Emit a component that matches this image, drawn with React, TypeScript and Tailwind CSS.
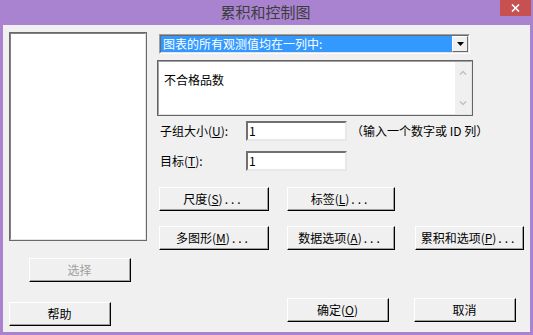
import React from 'react';

const FONT = 'font-["SimSun","Noto_Sans_CJK_SC",sans-serif]';

function Btn({ label, className = '', disabled = false }: { label: React.ReactNode; className?: string; disabled?: boolean }) {
    return (
        <div
            className={`h-[24px] bg-[#f0f0f0] border border-t-white border-l-white border-r-black border-b-black flex ${className}`}
        >
            <div className="flex-1 flex items-center justify-center border-r border-b border-[#a0a0a0]">
                <span className={`text-[12px] leading-none ${disabled ? 'text-[#a0a0a0]' : 'text-black'}`}>{label}</span>
            </div>
        </div>
    );
}

function Key({ k }: { k: string }) {
    return <span className="underline underline-offset-1">{k}</span>;
}

function Dots() {
    return <span className="tracking-[3px] ml-[2px]">...</span>;
}

function Field({ value }: { value: string }) {
    return (
        <div className="w-[101px] h-[20px] border-2 border-t-[#707070] border-l-[#707070] border-r-[#e8e8e8] border-b-[#e8e8e8] bg-white flex items-center pl-[1px]">
            <span className="text-[12px] leading-none text-black">{value}</span>
        </div>
    );
}

export default function App() {
    return (
        <div className={`w-[533px] h-[335px] bg-[#a983d0] flex flex-col select-none ${FONT}`}>
            {/* title bar */}
            <div className="h-[25px] flex items-start shrink-0">
                <div className="w-[31px]" />
                <div className="flex-1 flex justify-center pt-[3px]">
                    <span className="text-[15px] leading-[18px] text-[#3c3c3c] font-['Noto_Sans_CJK_SC',sans-serif]">累积和控制图</span>
                </div>
                <div className="w-[31px] h-[16px] bg-[#c75050] flex items-center justify-center mr-[2px]">
                    <svg width="9" height="8" viewBox="0 0 9 8">
                        <path d="M1 0.5 L8 7.5 M8 0.5 L1 7.5" stroke="white" strokeWidth="1.6" />
                    </svg>
                </div>
            </div>

            {/* body */}
            <div className="flex-1 mx-[3px] mb-[3px] bg-[#f0f0f0] flex">
                {/* left column */}
                <div className="w-[138px] ml-[6px] mt-[7px] flex flex-col">
                    <div className="h-[209px] border border-[#696969]">
                        <div className="h-full border border-t-[#808080] border-l-[#808080] border-r-[#e3e3e3] border-b-[#e3e3e3] bg-white" />
                    </div>
                    <Btn label="选择" disabled className="w-[102px] ml-[20px] mt-[17px]" />
                    <Btn label="帮助" className="w-[102px] mt-[20px]" />
                </div>

                {/* right column */}
                <div className="flex-1 ml-[10px] flex flex-col">
                    {/* dropdown */}
                    <div className="mt-[9px] ml-[2px] w-[311px] h-[20px] border border-t-[#a0a0a0] border-l-[#a0a0a0] border-r-white border-b-white">
                        <div className="h-full border border-t-[#696969] border-l-[#696969] border-r-[#e3e3e3] border-b-[#e3e3e3] bg-white flex">
                            <div className="flex-1 bg-[#3399ff] flex items-center pl-[2px]">
                                <span className="text-[12px] leading-none text-white">图表的所有观测值均在一列中:</span>
                            </div>
                            <div className="w-[16px] bg-[#f0f0f0] border border-t-white border-l-white border-r-[#696969] border-b-[#696969] flex items-center justify-center">
                                <svg width="7" height="4" viewBox="0 0 7 4">
                                    <path d="M0 0 H7 L3.5 4 Z" fill="black" />
                                </svg>
                            </div>
                        </div>
                    </div>

                    {/* textarea */}
                    <div className="mt-[6px] w-[316px] h-[56px] border border-[#646464]">
                        <div className="h-full border border-t-[#a0a0a0] border-l-[#a0a0a0] border-r-[#e3e3e3] border-b-[#e3e3e3] bg-white flex">
                            <div className="flex-1 pl-[5px] pt-[4px]">
                                <span className="text-[12px] leading-none text-black">不合格品数</span>
                            </div>
                            <div className="w-[16px] bg-[#f0f0f0] flex flex-col items-center justify-between py-[8px]">
                                <svg width="8" height="5" viewBox="0 0 8 5">
                                    <path d="M1 4.5 L4 1.5 L7 4.5" stroke="#c0c0c0" strokeWidth="1.5" fill="none" />
                                </svg>
                                <svg width="8" height="5" viewBox="0 0 8 5">
                                    <path d="M1 0.5 L4 3.5 L7 0.5" stroke="#c0c0c0" strokeWidth="1.5" fill="none" />
                                </svg>
                            </div>
                        </div>
                    </div>

                    {/* subgroup size */}
                    <div className="mt-[5px] flex items-center">
                        <span className="w-[89px] pl-[3px] text-[12px] leading-none text-black">
                            子组大小(<Key k="U" />):
                        </span>
                        <Field value="1" />
                        <span className="ml-[4px] text-[12px] leading-none text-black">（输入一个数字或 ID 列）</span>
                    </div>

                    {/* target */}
                    <div className="mt-[10px] flex items-center">
                        <span className="w-[89px] pl-[3px] text-[12px] leading-none text-black">
                            目标(<Key k="T" />):
                        </span>
                        <Field value="1" />
                    </div>

                    {/* option buttons */}
                    <div className="mt-[16px] ml-[2px] flex gap-[18px]">
                        <Btn label={<>尺度(<Key k="S" />)<Dots /></>} className="w-[110px]" />
                        <Btn label={<>标签(<Key k="L" />)<Dots /></>} className="w-[108px]" />
                    </div>
                    <div className="mt-[15px] ml-[2px] flex">
                        <Btn label={<>多图形(<Key k="M" />)<Dots /></>} className="w-[110px]" />
                        <Btn label={<>数据选项(<Key k="A" />)<Dots /></>} className="w-[108px] ml-[18px]" />
                        <Btn label={<>累积和选项(<Key k="P" />)<Dots /></>} className="w-[109px] ml-[20px]" />
                    </div>

                    {/* ok / cancel */}
                    <div className="mt-[48px] ml-[130px] flex gap-[25px]">
                        <Btn label={<>确定(<Key k="O" />)</>} className="w-[102px] h-[23px]" />
                        <Btn label="取消" className="w-[102px] h-[23px]" />
                    </div>
                </div>
            </div>
        </div>
    );
}
